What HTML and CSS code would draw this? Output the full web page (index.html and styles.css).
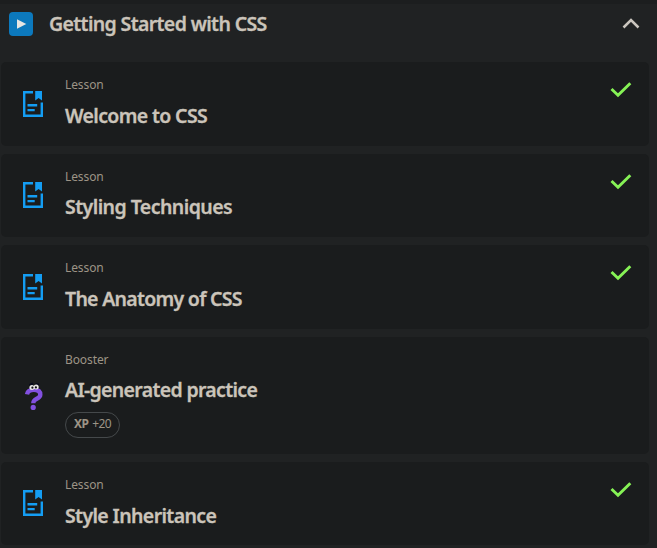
FILE: index.html
```html
<!DOCTYPE html>
<html lang="en">
<head>
<meta charset="utf-8">
<title>Getting Started with CSS</title>
<link rel="stylesheet" href="styles.css">
</head>
<body>
<svg class="defs" width="0" height="0">
  <symbol id="lesson" viewBox="0 0 22 28">
    <path fill="none" stroke="#149df3" stroke-width="2.4" d="M11 2.2H2.2V25.8H19.8V12.500"/>
    <path fill="#149df3" d="M13.200 1h6.800v9.500l-3.400-2.600-3.400 2.600zM5.500 14h9.700v2.500H5.500zM5.500 18.900h7.200v2.300H5.500z"/>
  </symbol>
  <symbol id="check" viewBox="0 0 22 16">
    <path fill="none" stroke="#86f256" stroke-width="2.9" d="M1.500 7 8 13.200 20.300 1.200"/>
  </symbol>
</svg>
<main class="module">
  <header class="head">
    <span class="play"><svg width="24" height="24" viewBox="0 0 24 24"><path fill="#e8e6e3" d="M8 7.2 17.3 12 8 16.8z"/></svg></span>
    <h1 class="title title-head">Getting Started with CSS</h1>
    <svg class="chevron" width="18" height="12" viewBox="0 0 18 12"><path fill="none" stroke="#cbc6bf" stroke-width="2.5" d="M1.500 9.500 9 2.100 16.500 9.500"/></svg>
  </header>
  <section class="list">
    <article class="card">
      <svg class="icon"><use href="#lesson"/></svg>
      <div class="text"><p class="kind">Lesson</p><h2 class="title t-welcome">Welcome to CSS</h2></div>
      <svg class="check"><use href="#check"/></svg>
    </article>
    <article class="card">
      <svg class="icon"><use href="#lesson"/></svg>
      <div class="text"><p class="kind kind-tight">Lesson</p><h2 class="title t-styling">Styling Techniques</h2></div>
      <svg class="check"><use href="#check"/></svg>
    </article>
    <article class="card">
      <svg class="icon"><use href="#lesson"/></svg>
      <div class="text"><p class="kind">Lesson</p><h2 class="title t-anatomy">The Anatomy of CSS</h2></div>
      <svg class="check"><use href="#check"/></svg>
    </article>
    <article class="card card-booster">
      <svg class="icon icon-booster" viewBox="0 0 22 28">
        <path fill="none" stroke="#8250df" stroke-width="4.4" d="M5 12.400C5.500 9.200 8 7.700 11.800 7.700c4.200 0 6.500 1.900 6.500 5 0 4.300-6.900 3.700-6.900 7.800v.8"/>
        <circle cx="11.200" cy="25.400" r="2.600" fill="#8250df"/>
        <path fill="none" stroke="#07091b" stroke-width="2.200" d="M7.500 3.300 11 1.400M13.500 2l3.500.8"/>
        <circle cx="9.900" cy="5.400" r="2.500" fill="#e8e6e3"/><circle cx="14.200" cy="4.900" r="2.500" fill="#e8e6e3"/>
        <circle cx="10.400" cy="5.700" r="1.100" fill="#101018"/><circle cx="13.900" cy="5.400" r="1.100" fill="#101018"/>
      </svg>
      <div class="text"><p class="kind kind-tight">Booster</p><h2 class="title t-ai">AI-generated practice</h2><span class="xp"><b>XP</b><span>+20</span></span></div>
    </article>
    <article class="card">
      <svg class="icon"><use href="#lesson"/></svg>
      <div class="text"><p class="kind">Lesson</p><h2 class="title t-inherit">Style Inheritance</h2></div>
      <svg class="check"><use href="#check"/></svg>
    </article>
  </section>
</main>
</body>
</html>
```
FILE: styles.css
```css
* { box-sizing: border-box; }
body {
  margin: 0;
  height: 548px;
  overflow: hidden;
  background: #1c1e1f;
  color: #cbc4ba;
  font-family: "Noto Sans", "Open Sans", sans-serif;
}
h1, h2, p { margin: 0; }
.defs { display: block; height: 0; }
.module { margin-top: 4px; height: 544px; background: #202223; }
.head { display: flex; align-items: center; height: 40px; padding: 0 17px 0 9px; }
.play { width: 24px; height: 24px; border-radius: 4px; background: #0c79bd; }
.play svg { display: block; }
.title {
  font-size: 19.5px;
  line-height: 27.6px;
  font-weight: 600;
  white-space: nowrap;
  -webkit-text-stroke: .3px currentColor;
}
.title-head { margin-left: 16px; letter-spacing: -.63px; }
.t-welcome { letter-spacing: -.64px; }
.t-styling { letter-spacing: -.55px; }
.t-anatomy { letter-spacing: -.71px; }
.t-ai { letter-spacing: -.67px; }
.t-inherit { letter-spacing: -.62px; }
.chevron { margin-left: auto; }
.list { display: flex; flex-direction: column; gap: 8px; padding: 18px 8px 0 1px; }
.card {
  display: flex;
  align-items: center;
  flex: none;
  height: 83.6px;
  padding: 0 17px 0 21px;
  border-radius: 5px;
  background: #1a1c1d;
}
.card-booster { height: 116.8px; }
.icon { width: 22px; height: 28px; flex: none; }
.icon-booster { margin-top: 2px; }
.text { align-self: flex-start; margin-left: 21px; padding-top: 14px; }
.kind { color: #9d9486; font-size: 12px; line-height: 18px; height: 26px; letter-spacing: -.1px; }
.kind-tight { height: 25.2px; }
.check { width: 22px; height: 16px; margin: 20px 0 0 auto; align-self: flex-start; }
.xp {
  display: flex;
  align-items: center;
  justify-content: center;
  gap: 4px;
  width: 55px;
  height: 26px;
  margin-top: 8.4px;
  border: 1px solid #45494b;
  border-radius: 13px;
  color: #9d9486;
  font-size: 12px;
  line-height: 22px;
  padding-bottom: 1px;
  letter-spacing: -.6px;
}
.xp b { font-weight: 700; }
```
